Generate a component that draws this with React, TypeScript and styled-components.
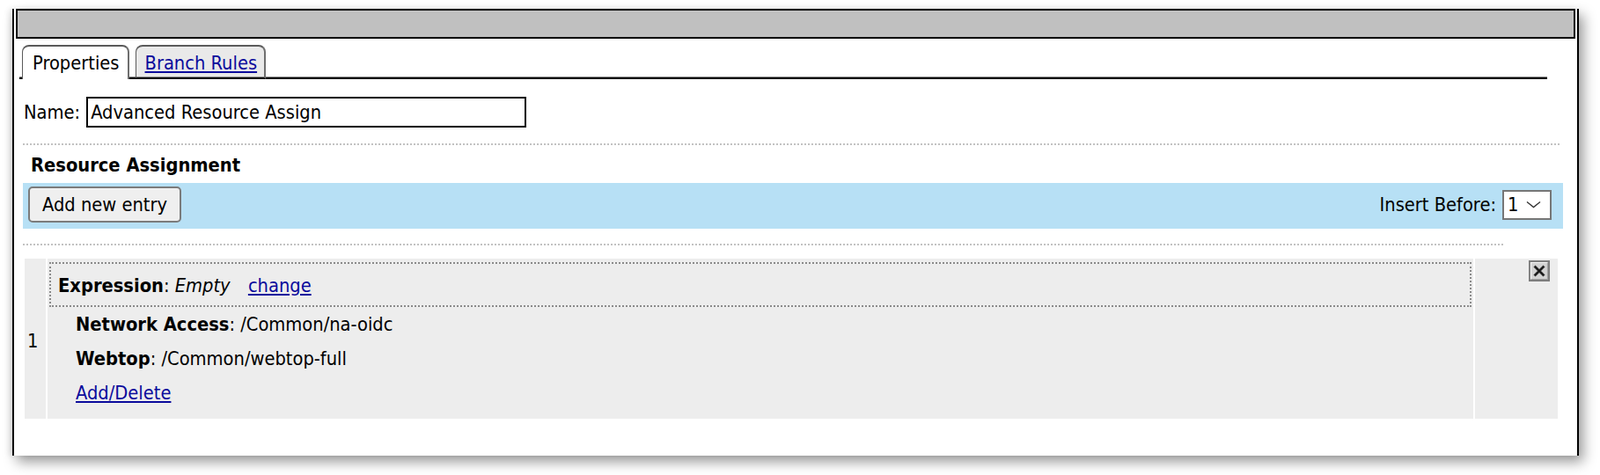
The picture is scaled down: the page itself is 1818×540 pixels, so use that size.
import React from 'react';
import styled, { createGlobalStyle } from 'styled-components';

const FONT = `"DejaVu Sans Condensed", "DejaVu Sans", Verdana, sans-serif`;

const Global = createGlobalStyle`
  html, body { margin: 0; padding: 0; background: #fff; }
  body {
    min-height: 540px;
    font-family: ${FONT};
    font-stretch: condensed;
    font-size: 21.7px;
    color: #000;
  }
  #root { min-height: 540px; padding-top: 8px; }
  * { box-sizing: border-box; }
`;

const Window = styled.div`
  margin: 0 0 0 14px;
  width: 1780px;
  height: 508px;
  border-left: 2px solid #000;
  border-right: 2px solid #000;
  background: #fff;
  box-shadow: -4px 0 6px rgba(0, 0, 0, 0.08), 5px 7px 14px rgba(0, 0, 0, 0.4);
`;

const TitleBar = styled.div`
  margin: 2px 2px 0;
  height: 34px;
  border: 2px solid #000;
  background: #c0c0c0;
`;

const Body = styled.div`
  padding: 0 16px 0 10px;
`;

const TabBar = styled.div`
  display: flex;
  align-items: flex-end;
  height: 39px;
  margin: 7px 18px 0 -4px;
`;

const TabLine = styled.div<{ $w?: number }>`
  flex: ${(p) => (p.$w ? `0 0 ${p.$w}px` : '1 1 auto')};
  height: 3px;
  border-top: 1px solid #8a8a8a;
  border-bottom: 2px solid #000;
`;

const Tab = styled.div<{ $active?: boolean }>`
  height: 39px;
  padding: ${(p) => (p.$active ? '6px 9px 0 11px' : '6px 8px 0 10px')};
  line-height: 26px;
  white-space: nowrap;
  border: 1px solid #5a5a5a;
  border-top-width: 2px;
  border-right: 2px solid #6e6e6e;
  border-radius: 8px 8px 0 0;
  background: ${(p) => (p.$active ? '#fff' : '#e9e9e9')};
  border-bottom: ${(p) => (p.$active ? 'none' : '2px solid #000')};
  box-shadow: ${(p) => (p.$active ? 'none' : 'inset 0 -1px 0 #8a8a8a')};
`;

const Link = styled.a<{ $ml?: number }>`
  color: #0b0b9c;
  text-decoration: underline;
  cursor: pointer;
  margin-left: ${(p) => p.$ml ?? 0}px;
`;

const NameRow = styled.div`
  display: flex;
  align-items: center;
  margin-top: 20px;
  padding-left: 1px;
`;

const TextInput = styled.input`
  margin-left: 7px;
  width: 500px;
  height: 35px;
  border: 2px solid #000;
  padding: 0 3px;
  font: inherit;
  color: #000;
  background: #fff;
  outline: none;
`;

const Divider = styled.div<{ $top: number; $right: number }>`
  margin-top: ${(p) => p.$top}px;
  margin-right: ${(p) => p.$right}px;
  border-top: 2px dotted #c2c2c2;
`;

const SectionTitle = styled.div`
  margin-top: 10px;
  padding-left: 9px;
  font-weight: bold;
  line-height: 26px;
`;

const ActionBar = styled.div`
  margin-top: 7px;
  height: 52px;
  background: #b7e0f5;
  display: flex;
  align-items: center;
  justify-content: space-between;
  padding: 0 13px 3px 6px;
`;

const Button = styled.button`
  height: 41px;
  padding: 0 14px;
  border: 2px solid #7b7b7b;
  border-radius: 5px;
  background: #efefef;
  font: inherit;
  color: #000;
`;

const InsertGroup = styled.div`
  display: flex;
  align-items: center;
  gap: 7px;
`;

const SelectBox = styled.div`
  width: 56px;
  height: 34px;
  border: 2px solid #767676;
  background: #fff;
  display: flex;
  align-items: center;
  gap: 9px;
  padding-left: 4px;
  line-height: 26px;
`;

const EntryRow = styled.div`
  margin: 15px 6px 0 2px;
  height: 182px;
  display: grid;
  grid-template-columns: 24px 1fr 94px;
  column-gap: 2px;
`;

const NumCell = styled.div`
  background: #ededed;
  display: flex;
  align-items: center;
  padding: 4px 0 0 3px;
`;

const MainCell = styled.div`
  background: #ededed;
  padding: 4px 2px 0 2px;
`;

const ExprBox = styled.div`
  border: 2px dotted #8a8a8a;
  padding: 12px 8px 10px;
  line-height: 25px;
`;

const Line = styled.div`
  line-height: 39px;
  padding-left: 30px;
  &:first-of-type {
    margin-top: 4px;
  }
`;

const CloseCell = styled.div`
  background: #ededed;
  display: flex;
  justify-content: flex-end;
  align-items: flex-start;
  padding: 2px 9px 0 0;
`;

const Chevron = () => (
  <svg width="17" height="9" viewBox="0 0 17 9">
    <polyline points="1,1.5 8.5,7.5 16,1.5" fill="none" stroke="#333" strokeWidth="1.4" />
  </svg>
);

const CloseIcon = () => (
  <svg width="24" height="24" viewBox="0 0 24 24">
    <rect x="0" y="0" width="24" height="24" fill="#7d7d7d" />
    <rect x="2" y="2" width="20" height="20" fill="#d2d2d2" />
    <path d="M2.5 21.5V2.5h19" stroke="#f2f2f2" fill="none" strokeWidth="1.2" />
    <path d="M21.5 2.5v19h-19" stroke="#a0a0a0" fill="none" strokeWidth="1.2" />
    <path d="M6.5 6.5l11 11M17.5 6.5l-11 11" stroke="#3a3a3a" strokeWidth="3" />
    <path d="M7 7l10 10M17 7L7 17" stroke="#111" strokeWidth="1.4" />
  </svg>
);

export default function App() {
  return (
    <>
      <Global />
      <Window>
        <TitleBar />
        <Body>
          <TabBar>
            <TabLine $w={3} />
            <Tab $active>Properties</Tab>
            <TabLine $w={7} />
            <Tab>
              <Link>Branch Rules</Link>
            </Tab>
            <TabLine />
          </TabBar>

          <NameRow>
            <span>Name:</span>
            <TextInput readOnly defaultValue="Advanced Resource Assign" />
          </NameRow>

          <Divider $top={18} $right={4} />

          <SectionTitle>Resource Assignment</SectionTitle>

          <ActionBar>
            <Button type="button">Add new entry</Button>
            <InsertGroup>
              <span>Insert Before:</span>
              <SelectBox>
                <span>1</span>
                <Chevron />
              </SelectBox>
            </InsertGroup>
          </ActionBar>

          <Divider $top={17} $right={68} />

          <EntryRow>
            <NumCell>1</NumCell>
            <MainCell>
              <ExprBox>
                <b>Expression</b>: <i>Empty</i> <Link $ml={14}>change</Link>
              </ExprBox>
              <Line>
                <b>Network Access</b>: /Common/na-oidc
              </Line>
              <Line>
                <b>Webtop</b>: /Common/webtop-full
              </Line>
              <Line>
                <Link>Add/Delete</Link>
              </Line>
            </MainCell>
            <CloseCell>
              <CloseIcon />
            </CloseCell>
          </EntryRow>
        </Body>
      </Window>
    </>
  );
}
